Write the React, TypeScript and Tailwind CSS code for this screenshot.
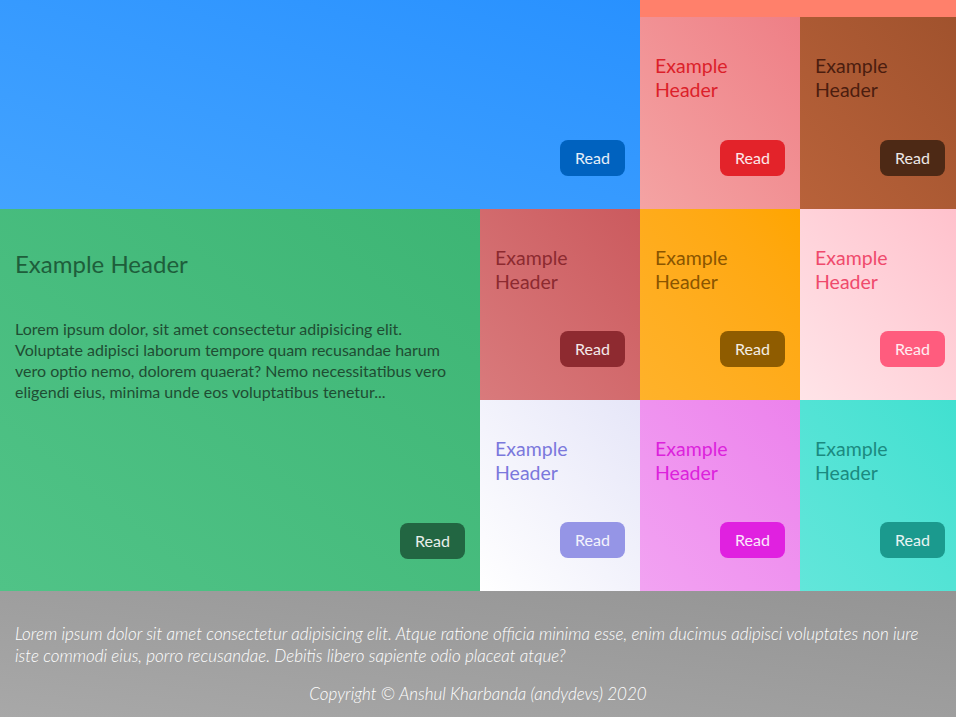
type CellProps = {
  title?: string
  bg: string
  text: string
  btn: string
  className?: string
}

function Cell({ title, bg, text, btn, className = "" }: CellProps) {
  return (
    <div className={`flex flex-col p-[15px] pb-[33px] ${bg} ${className}`}>
      {title && (
        <h2 className={`mt-[22px] text-[19.5px] leading-[24px] w-[100px] ${text}`}>{title}</h2>
      )}
      <button className={`mt-auto self-end h-9 w-[65px] rounded-lg text-[16px] text-white/90 ${btn}`}>
        Read
      </button>
    </div>
  )
}

export default function App() {
  return (
    <div className="w-[956px] h-[717px] overflow-hidden font-['Lato','Open_Sans',sans-serif]">
      <main className="w-[960px] grid grid-cols-[repeat(6,160px)] grid-rows-[17px_192px_191px_191px]">
        <Cell
          bg="bg-linear-to-tr from-[#43a3ff] to-[#2891ff]"
          text=""
          btn="bg-[#0062bf]"
          className="col-span-4 row-span-2"
        />
        <div className="col-span-2 bg-[#ff806b]" />
        <Cell
          title="Example Header"
          bg="bg-linear-to-tr from-[#f4a3a3] to-[#ee7f86]"
          text="text-[#dc1f2a]"
          btn="bg-[#e3232a]"
        />
        <Cell
          title="Example Header"
          bg="bg-linear-to-tr from-[#b8623a] to-[#a0522d]"
          text="text-[#4b1d0f]"
          btn="bg-[#4d2915]"
        />

        <div className="col-span-3 row-span-2 flex flex-col p-[15px] pb-[32px] bg-linear-to-tr from-[#50c387] to-[#3db574]">
          <h1 className="mt-[25px] text-[24px] leading-[29px] text-[#1e5e3b]">Example Header</h1>
          <p className="mt-[40px] text-[16px] leading-[21px] text-[#1f4d33]">
            Lorem ipsum dolor, sit amet consectetur adipisicing elit. Voluptate adipisci laborum tempore quam
            recusandae harum vero optio nemo, dolorem quaerat? Nemo necessitatibus vero eligendi eius, minima unde
            eos voluptatibus tenetur...
          </p>
          <button className="mt-auto self-end h-9 w-[65px] rounded-lg text-[16px] text-white/90 bg-[#226642]">
            Read
          </button>
        </div>
        <Cell
          title="Example Header"
          bg="bg-linear-to-tr from-[#d97a7c] to-[#cb5a5e]"
          text="text-[#8c2a30]"
          btn="bg-[#8e2a30]"
        />
        <Cell
          title="Example Header"
          bg="bg-linear-to-tr from-[#ffb22a] to-[#ffa500]"
          text="text-[#8a5500]"
          btn="bg-[#8f5c00]"
        />
        <Cell
          title="Example Header"
          bg="bg-linear-to-tr from-[#ffe4e8] to-[#ffc1cc]"
          text="text-[#ef4a6c]"
          btn="bg-[#ff5c7e]"
        />
        <Cell
          title="Example Header"
          bg="bg-linear-to-tr from-[#ffffff] to-[#e6e6f8]"
          text="text-[#7b78dc]"
          btn="bg-[#9595e6]"
        />
        <Cell
          title="Example Header"
          bg="bg-linear-to-tr from-[#f2a3f2] to-[#ec82ec]"
          text="text-[#dc22dc]"
          btn="bg-[#e021e0]"
        />
        <Cell
          title="Example Header"
          bg="bg-linear-to-tr from-[#62e6da] to-[#40e0d0]"
          text="text-[#1b8a80]"
          btn="bg-[#1b9a8e]"
        />
      </main>

      <footer className="h-[126px] px-[15px] pt-[32px] bg-linear-to-tr from-[#a8a8a8] to-[#949494] text-white italic font-light">
        <p className="text-[17px] leading-[22px]">
          Lorem ipsum dolor sit amet consectetur adipisicing elit. Atque ratione officia minima esse, enim ducimus
          adipisci voluptates non iure iste commodi eius, porro recusandae. Debitis libero sapiente odio placeat atque?
        </p>
        <p className="mt-[16px] text-center text-[17px] leading-[22px]">Copyright © Anshul Kharbanda (andydevs) 2020</p>
      </footer>
    </div>
  )
}
